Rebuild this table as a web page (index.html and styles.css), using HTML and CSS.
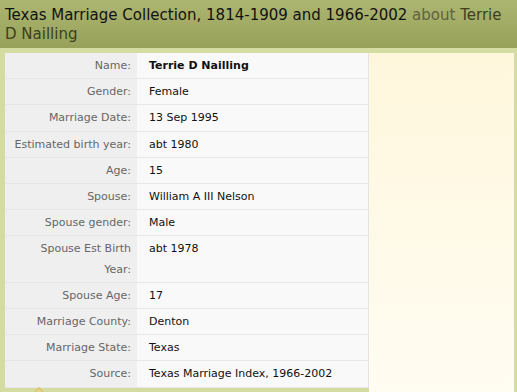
FILE: index.html
```html
<!DOCTYPE html>
<html>
<head>
<meta charset="utf-8">
<link rel="stylesheet" href="styles.css">
</head>
<body>
<div class="header">
  <h1 class="title"><span class="coll">Texas Marriage Collection, 1814-1909 and 1966-2002</span> <span class="about">about</span> <span class="person">Terrie D Nailling</span></h1>
</div>
<div class="main">
  <table class="record">
    <tr><th>Name:</th><td class="strong">Terrie D Nailling</td></tr>
    <tr><th>Gender:</th><td>Female</td></tr>
    <tr><th>Marriage Date:</th><td>13 Sep 1995</td></tr>
    <tr><th>Estimated birth year:</th><td>abt 1980</td></tr>
    <tr><th>Age:</th><td>15</td></tr>
    <tr><th>Spouse:</th><td>William A III Nelson</td></tr>
    <tr><th>Spouse gender:</th><td>Male</td></tr>
    <tr><th>Spouse Est Birth Year:</th><td>abt 1978</td></tr>
    <tr><th>Spouse Age:</th><td>17</td></tr>
    <tr><th>Marriage County:</th><td>Denton</td></tr>
    <tr><th>Marriage State:</th><td>Texas</td></tr>
    <tr><th>Source:</th><td>Texas Marriage Index, 1966-2002</td></tr>
  </table>
  <div class="aside"></div>
  <svg class="marker" width="10" height="6" viewBox="0 0 10 6"><path d="M1 6 L5 2 L9 6" fill="none" stroke="#e8c060" stroke-width="1.5"/></svg>
</div>
</body>
</html>
```
FILE: styles.css
```css
html, body {
  margin: 0;
  padding: 0;
}
body {
  font-family: "DejaVu Sans", Verdana, sans-serif;
  background: #fffdf4;
  height: 392px;
  overflow: hidden;
}
.header {
  background: linear-gradient(#acb671, #97a159);
  padding: 6px 5px 0 5px;
  box-sizing: border-box;
  height: 48px;
}
.title {
  margin: 0;
  font-size: 15px;
  font-weight: normal;
  line-height: 19px;
  color: #111;
}
.about {
  color: #5e6340;
}
.person {
  color: #3c4020;
}
.main {
  position: relative;
  display: flex;
  align-items: stretch;
  background: #d4dca2;
  padding: 5px 3px 0 5px;
  height: 344px;
  box-sizing: border-box;
  overflow: hidden;
}
.record {
  border-collapse: collapse;
  width: 364px;
  font-size: 11px;
  align-self: flex-start;
  border-right: 1px solid #e4e4e4;
}
.record th {
  width: 120px;
  background: #efefef;
  color: #666;
  font-weight: normal;
  text-align: right;
  vertical-align: top;
  padding: 3px 6px 2px 6px;
  line-height: 20.2px;
  border-bottom: 1px solid #e6e6e6;
}
.record td {
  background: #f9f9f9;
  color: #111;
  vertical-align: top;
  padding: 3px 6px 2px 12px;
  line-height: 20.2px;
  border-bottom: 1px solid #e6e6e6;
}
.record td.strong {
  font-weight: bold;
}
.aside {
  flex: 1;
  background: linear-gradient(#fff7dc, #fffcf2);
}
.marker {
  position: absolute;
  left: 34px;
  top: 338px;
}
```
